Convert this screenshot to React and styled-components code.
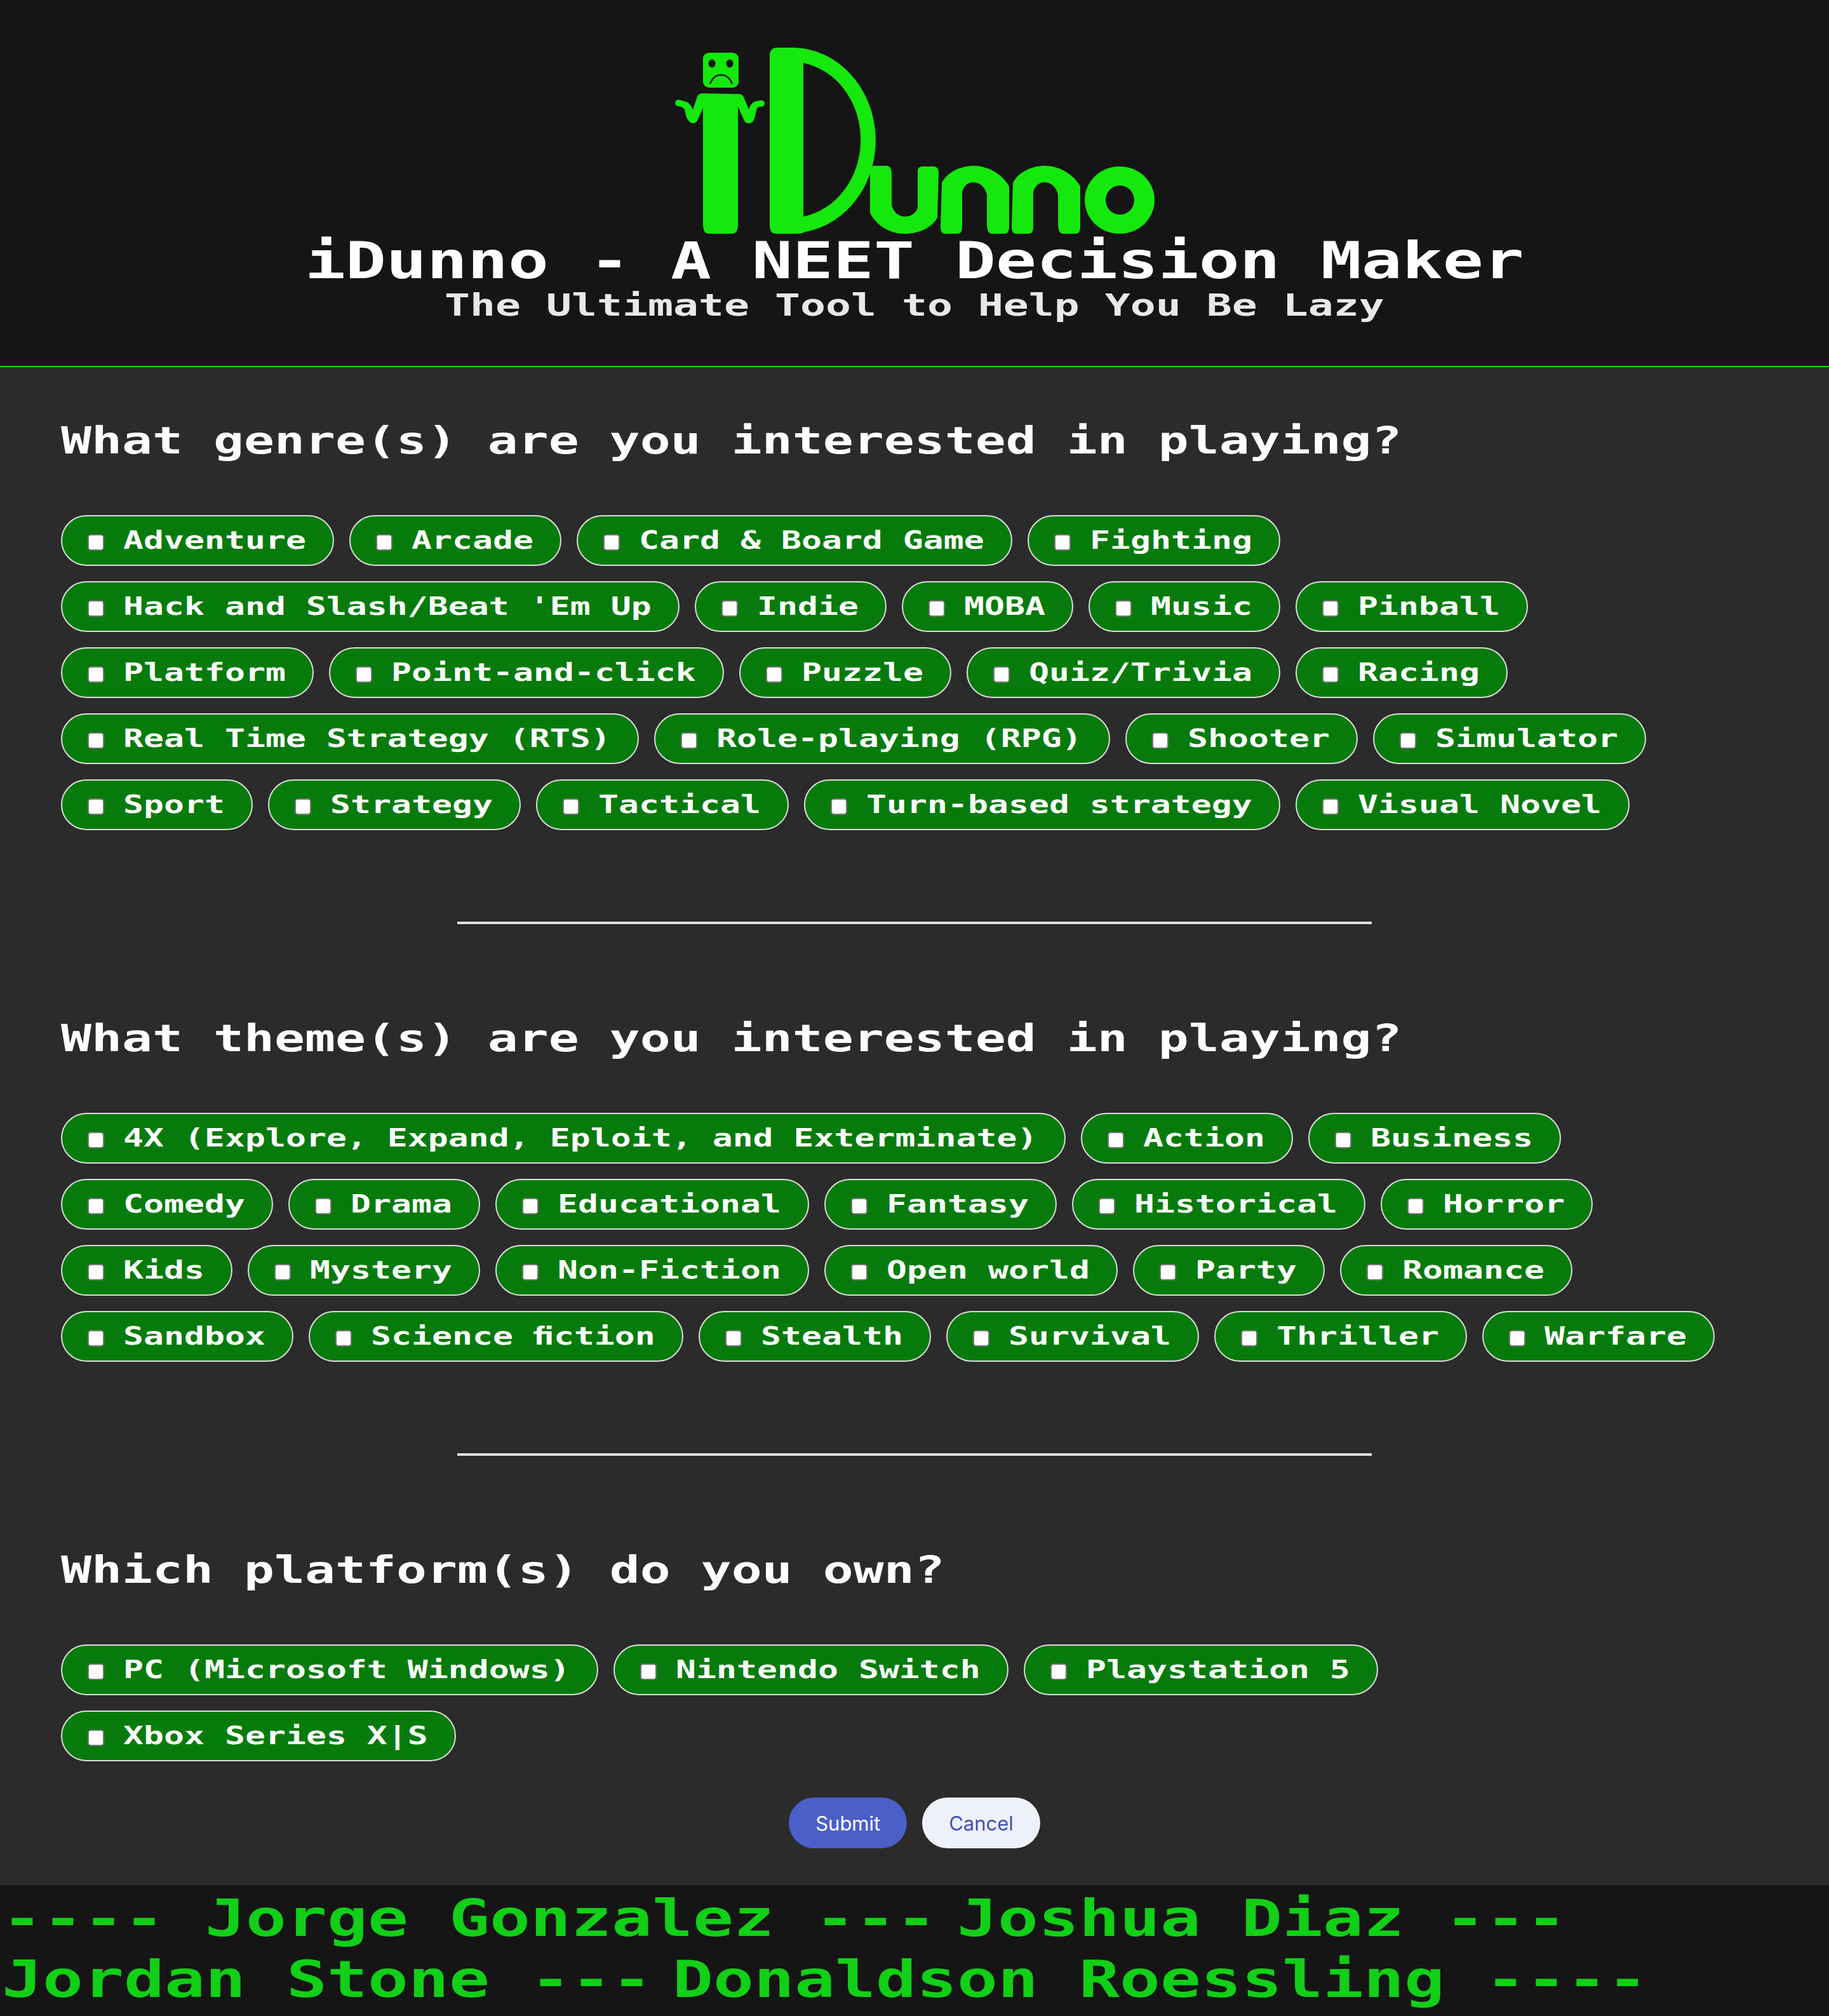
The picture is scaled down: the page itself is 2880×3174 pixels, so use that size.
import React from 'react';
import styled, { createGlobalStyle } from 'styled-components';

const genres = [
  'Adventure', 'Arcade', 'Card & Board Game', 'Fighting', "Hack and Slash/Beat 'Em Up", 'Indie', 'MOBA', 'Music', 'Pinball',
  'Platform', 'Point-and-click', 'Puzzle', 'Quiz/Trivia', 'Racing', 'Real Time Strategy (RTS)', 'Role-playing (RPG)',
  'Shooter', 'Simulator', 'Sport', 'Strategy', 'Tactical', 'Turn-based strategy', 'Visual Novel',
];

const themes = [
  '4X (Explore, Expand, Eploit, and Exterminate)', 'Action', 'Business', 'Comedy', 'Drama', 'Educational', 'Fantasy',
  'Historical', 'Horror', 'Kids', 'Mystery', 'Non-Fiction', 'Open world', 'Party', 'Romance', 'Sandbox',
  'Science ﬁction', 'Stealth', 'Survival', 'Thriller', 'Warfare',
];

const platforms = ['PC (Microsoft Windows)', 'Nintendo Switch', 'Playstation 5', 'Xbox Series X|S'];

// no pixel font here, so a mono bold gets stretched to the same cell size
const pixelSizes = {
  title: { cap: 58, adv: 64, line: 64 },
  tagline: { cap: 35, adv: 40, line: 40 },
  question: { cap: 43, adv: 48, line: 48 },
  chip: { cap: 28, adv: 32, line: 40 },
  credit: { cap: 58, adv: 64, line: 96 },
};

const GlobalStyle = createGlobalStyle`
  html, body {
    margin: 0;
    background-color: #151515;
  }
  * {
    box-sizing: border-box;
  }
`;

const PixelCell = styled.span`
  display: inline-block;
  flex: none;
  width: ${(props) => props.$adv * props.$count}px;
  height: ${(props) => props.$line}px;
  font-family: 'DejaVu Sans Mono', 'Liberation Mono', monospace;
  font-weight: 700;
  font-size: ${(props) => props.$cap / 0.729}px;
  line-height: ${(props) => props.$line}px;
  white-space: pre;
`;

const PixelGlyphs = styled.span`
  display: inline-block;
  transform: scaleX(${(props) => props.$stretch});
  transform-origin: left center;
`;

const Pixel = ({ size, text }) => {
  const { cap, adv, line } = pixelSizes[size];
  const stretch = adv / ((cap / 0.729) * 0.602);
  return (
    <PixelCell $cap={cap} $adv={adv} $line={line} $count={text.length}>
      <PixelGlyphs $stretch={stretch}>{text}</PixelGlyphs>
    </PixelCell>
  );
};

const Page = styled.div`
  width: 2880px;
  background-color: #2b2b2b;
`;

const Header = styled.header`
  display: flex;
  flex-direction: column;
  align-items: center;
  height: 578px;
  padding-top: 72px;
  background-color: #151515;
  border-bottom: 2px solid #17d91c;
`;

const Logo = styled.svg`
  display: block;
  flex: none;
  width: 760px;
  height: 300px;
  margin-bottom: 7px;
`;

const Title = styled.h1`
  display: flex;
  margin: 0 0 17px;
  color: #fff;
  font-size: inherit;
`;

const Tagline = styled.p`
  display: flex;
  margin: 0;
  color: #e8e8e8;
`;

const Main = styled.main`
  padding: 92px 96px 58px;
`;

const Question = styled.h2`
  display: flex;
  margin: 0 0 93px;
  color: #fff;
  font-size: inherit;
`;

const ChipGroup = styled.div`
  display: flex;
  flex-wrap: wrap;
  gap: 24px;
`;

const Chip = styled.label`
  display: flex;
  align-items: center;
  height: 80px;
  padding: 0 42px 0 40px;
  color: #fff;
  background-color: #067b0c;
  border: 2px solid #dcdcdc;
  border-radius: 40px;
`;

const ChipBox = styled.input.attrs(() => ({
  type: 'checkbox',
}))`
  flex: none;
  appearance: none;
  width: 26px;
  height: 26px;
  margin: 6px 30px 0 0;
  background-color: #fff;
  border: 2px solid #767676;
  border-radius: 5px;
`;

const ChipLabel = styled.span`
  display: flex;
`;

const Divider = styled.hr`
  width: 1440px;
  height: 4px;
  margin: 144px auto 156px;
  background-color: #e0e0e0;
  border: none;
`;

const Actions = styled.div`
  display: flex;
  justify-content: center;
  gap: 24px;
  margin-top: 57px;
`;

const ActionButton = styled.button`
  height: 80px;
  padding: 0 42px;
  color: ${(props) => (props.$primary ? '#fff' : '#3f51b5')};
  font-family: Inter, 'Liberation Sans', sans-serif;
  font-size: 31px;
  background-color: ${(props) => (props.$primary ? '#4a5fc8' : '#eff1fa')};
  border: none;
  border-radius: 40px;
`;

const Footer = styled.footer`
  height: 206px;
  padding: 5px 0 0 3px;
  overflow: hidden;
  color: #12cf17;
  background-color: #151515;
`;

const CreditLine = styled.div`
  display: flex;
`;

const CreditTail = styled.span`
  display: flex;
  margin-left: -32px;
`;

const ChipList = ({ items }) => (
  <ChipGroup>
    {items.map((item) => (
      <Chip key={item}>
        <ChipBox />
        <ChipLabel>
          <Pixel size="chip" text={item} />
        </ChipLabel>
      </Chip>
    ))}
  </ChipGroup>
);

const BrandLogo = () => (
  <Logo viewBox="1060 72 760 300" aria-label="iDunno logo">
    <g fill="#15e80d">
      <rect x="1107" y="83" width="56" height="55" rx="10" ry="9" />
      <path d="M1098 152 Q1100 147 1107 147 L1163 148 Q1169 148 1171 153 L1179 172 Q1181 164 1188 160 L1198 158 Q1204 158 1204 163 Q1204 168 1198 168 L1193 169 Q1191 172 1190 178 Q1188 188 1185 192 Q1181 195 1178 194 Q1174 194 1172 190 L1162 168 L1162 356 Q1161 368 1153 368 L1116 368 Q1108 368 1107 356 L1107 170 L1098 190 Q1095 194 1092 194 Q1087 194 1085 191 Q1081 186 1080 182 Q1079 172 1076 170 L1072 168 L1067 167 Q1063 166 1063 162 Q1064 157 1069 157 L1080 160 Q1087 162 1091 173 Z" />
      <path
        fillRule="evenodd"
        d="M1212 88 Q1212 75 1224 75 L1252 75 A132 146 0 0 1 1268 365 Q1264 368 1254 368 L1222 368 Q1212 368 1212 355 Z M1265 99 L1265 341 A110 123 0 0 0 1265 99 Z"
      />
      <path d="M1370 270 Q1370 261 1378 261 L1396 261 Q1404 261 1404 275 L1404 323 C1407 334 1415 341 1425 341 C1435 341 1443 335 1445 327 L1445 270 Q1445 262 1453 262 L1470 262 Q1478 262 1478 272 L1476 343 C1466 359 1447 368 1425 368 C1400 368 1380 355 1370 335 Z" />
      <path
        id="logo-n"
        d="M1481 358 L1483 288 C1491 271 1513 261 1533 261 C1555 261 1577 273 1589 293 L1589 358 Q1589 368 1581 368 L1562 368 Q1554 368 1554 352 L1554 307 C1552 295 1543 287 1533 287 C1524 287 1517 293 1515 303 L1515 358 Q1515 368 1507 368 L1489 368 Q1481 368 1481 358 Z"
      />
      <use href="#logo-n" x="112" />
      <path
        fillRule="evenodd"
        d="M1708 315 A55 53 0 1 1 1818 315 A55 53 0 1 1 1708 315 Z M1741 315 A22.5 23 0 1 0 1786 315 A22.5 23 0 1 0 1741 315 Z"
      />
    </g>
    <g fill="#151515">
      <ellipse cx="1121" cy="100" rx="5.5" ry="6.5" />
      <ellipse cx="1149" cy="100" rx="5.5" ry="6.5" />
    </g>
    <path
      d="M1118 132 C1122 122 1128 118 1135 118 C1143 118 1149 122 1153 132"
      fill="none"
      stroke="#151515"
      strokeWidth="2.5"
    />
  </Logo>
);

const App = () => (
  <Page>
    <GlobalStyle />
    <Header>
      <BrandLogo />
      <Title>
        <Pixel size="title" text="iDunno - A NEET Decision Maker" />
      </Title>
      <Tagline>
        <Pixel size="tagline" text="The Ultimate Tool to Help You Be Lazy" />
      </Tagline>
    </Header>
    <Main>
      <Question>
        <Pixel size="question" text="What genre(s) are you interested in playing?" />
      </Question>
      <ChipList items={genres} />
      <Divider />
      <Question>
        <Pixel size="question" text="What theme(s) are you interested in playing?" />
      </Question>
      <ChipList items={themes} />
      <Divider />
      <Question>
        <Pixel size="question" text="Which platform(s) do you own?" />
      </Question>
      <ChipList items={platforms} />
      <Actions>
        <ActionButton $primary>Submit</ActionButton>
        <ActionButton>Cancel</ActionButton>
      </Actions>
    </Main>
    <Footer>
      <CreditLine>
        <Pixel size="credit" text="---- Jorge Gonzalez ---" />
        <CreditTail>
          <Pixel size="credit" text=" Joshua Diaz ---" />
        </CreditTail>
      </CreditLine>
      <CreditLine>
        <Pixel size="credit" text="Jordan Stone ---" />
        <CreditTail>
          <Pixel size="credit" text=" Donaldson Roessling ----" />
        </CreditTail>
      </CreditLine>
    </Footer>
  </Page>
);

export default App;
